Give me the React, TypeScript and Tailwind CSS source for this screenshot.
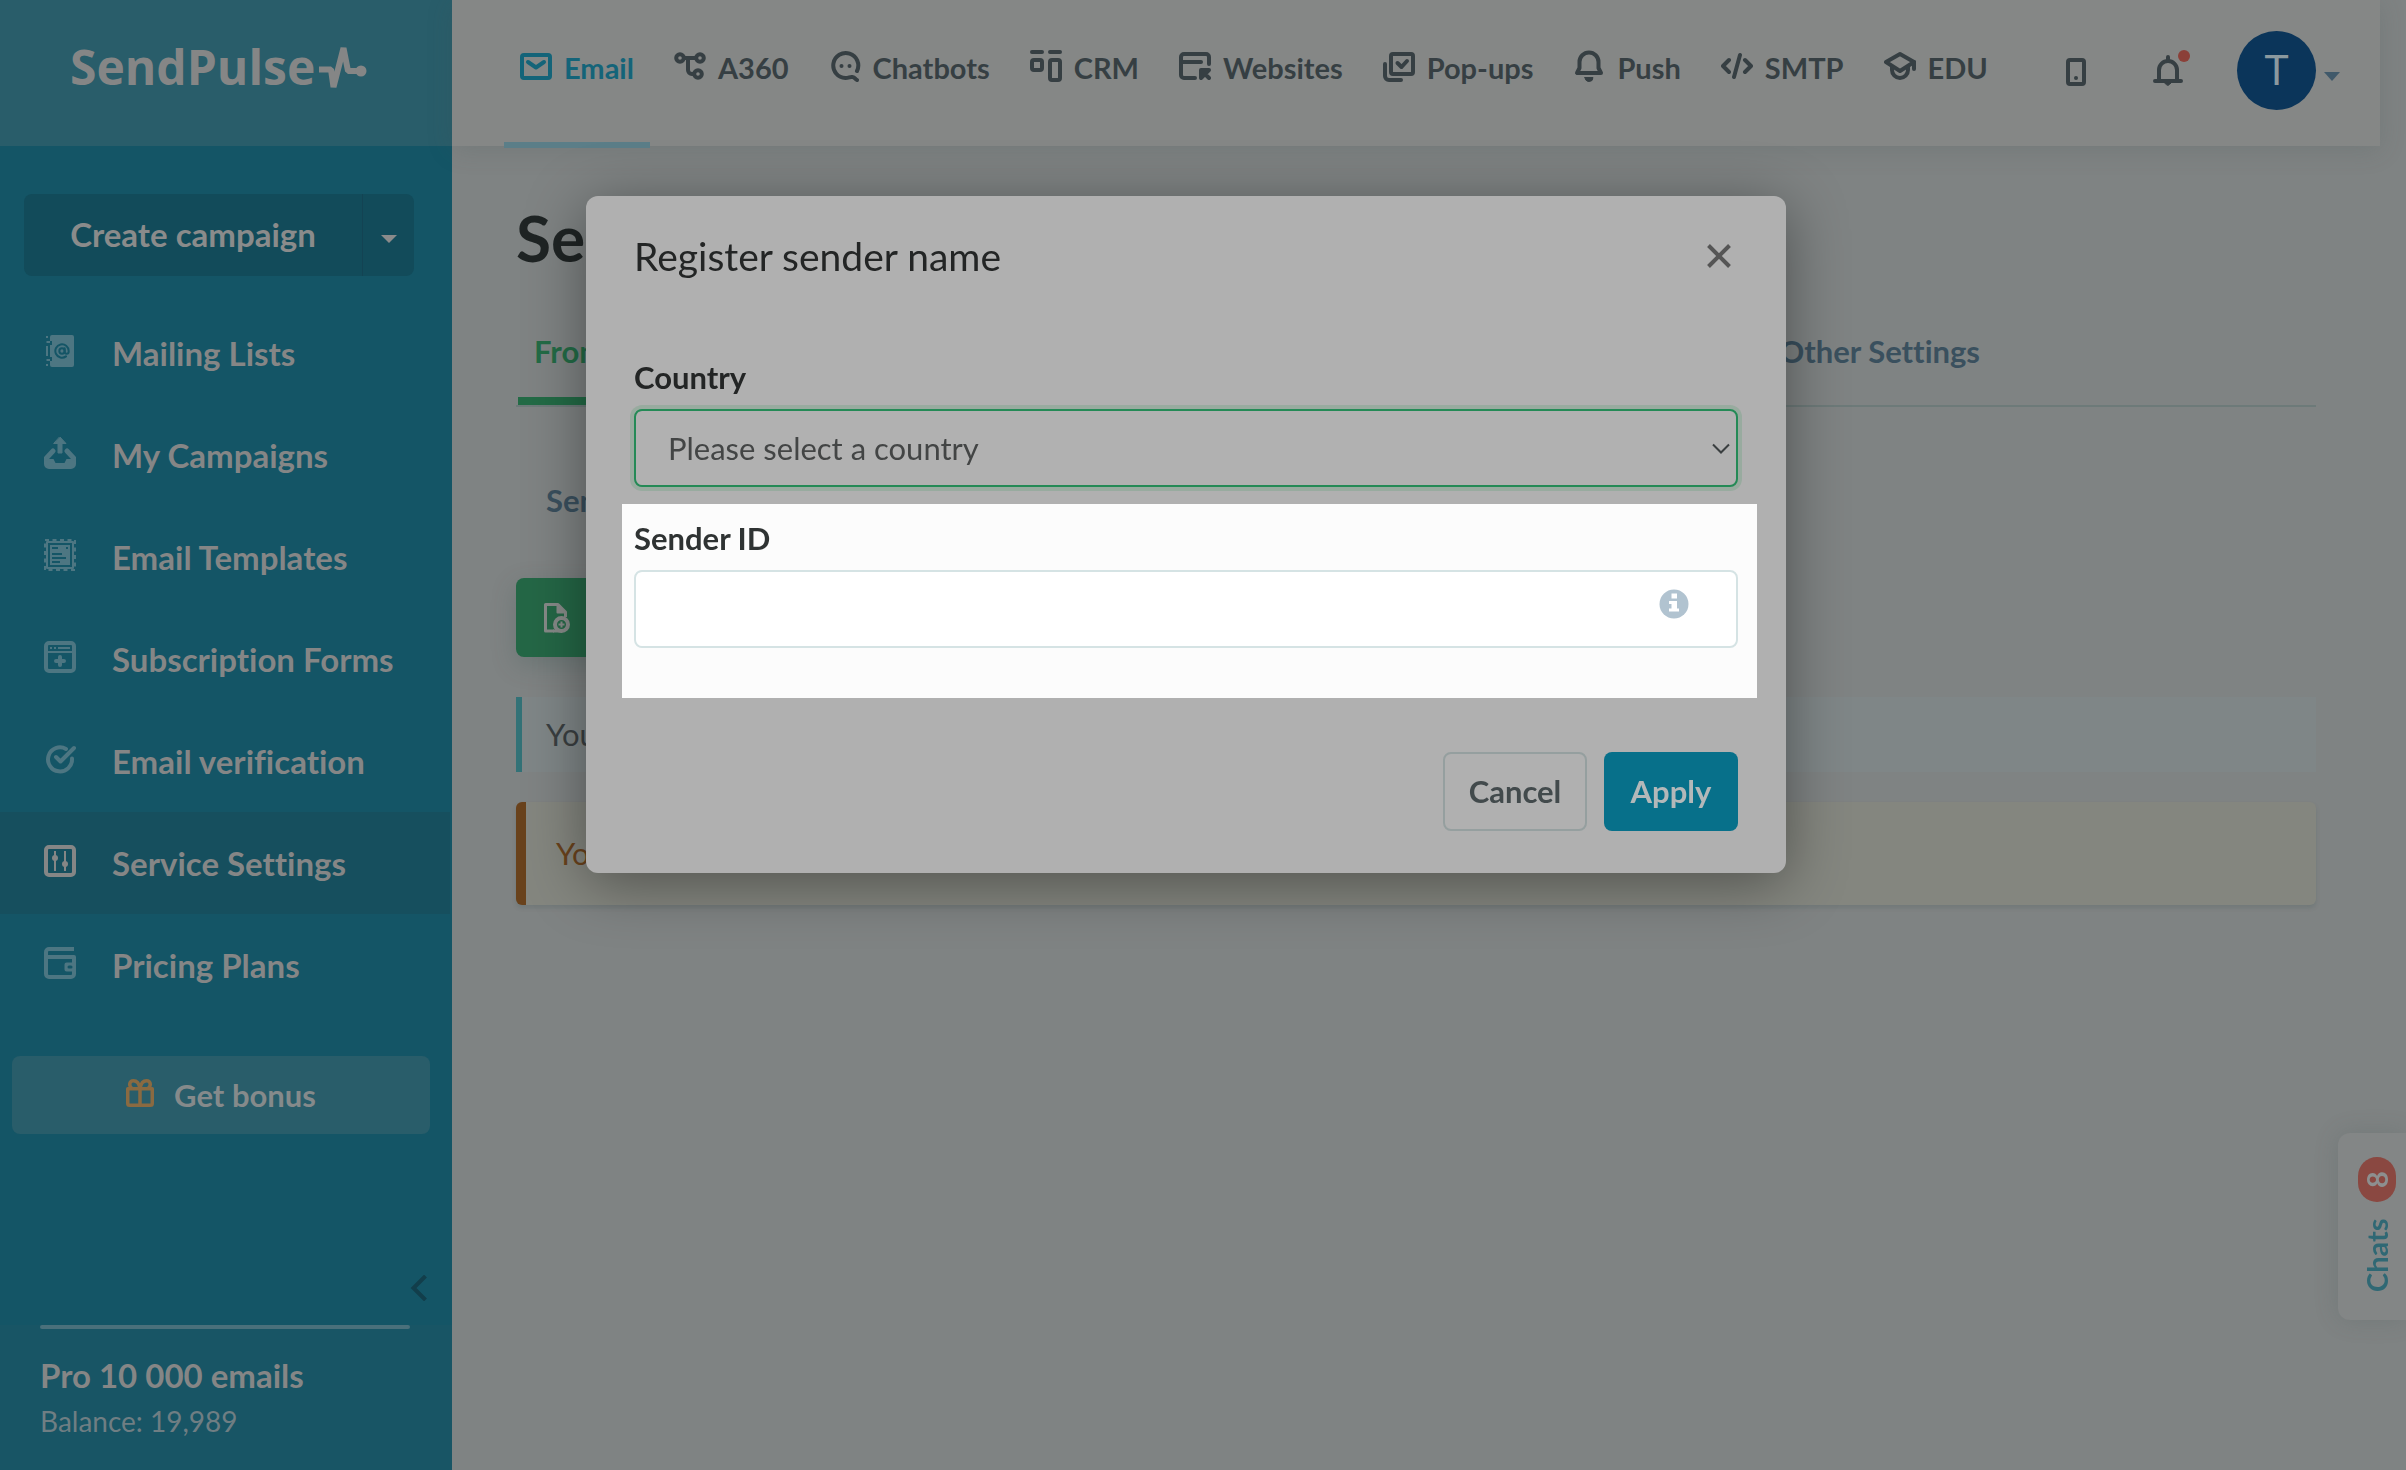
import type { ReactNode } from "react";
import { AtSign } from "lucide-react";
import clsx from "clsx";

function Icon({ children, className = "size-8" }: { children: ReactNode; className?: string }) {
  return (
    <svg
      viewBox="0 0 32 32"
      fill="none"
      stroke="currentColor"
      strokeWidth={4}
      strokeLinecap="round"
      strokeLinejoin="round"
      aria-hidden="true"
      className={clsx("shrink-0", className)}
    >
      {children}
    </svg>
  );
}

const sidebarItems = [
  {
    label: "Mailing Lists",
    icon: (
      <Icon>
        <path
          d="M8 0H28a2 2 0 0 1 2 2V30a2 2 0 0 1-2 2H8a2 2 0 0 1-2-2V26H8V22H6V10H8V6H6V2a2 2 0 0 1 2-2Z"
          fill="currentColor"
          stroke="none"
        />
        <path d="M3 1V3M3 11V21M3 29V31M2.5 7H6M2.5 25H6" strokeWidth={2} strokeLinecap="butt" />
        <AtSign x={10} y={8} width={16} height={16} stroke="#145566" strokeWidth={3} />
      </Icon>
    ),
  },
  {
    label: "My Campaigns",
    icon: (
      <Icon>
        <path
          d="M16 0 22 6.500H18V16H14V6.500H10Z"
          fill="currentColor"
          strokeWidth={1}
        />
        <path
          d="M0 22H9.500L11.500 26H20.500L22.500 22H32V27a5 5 0 0 1-5 5H5a5 5 0 0 1-5-5Z"
          fill="currentColor"
          stroke="none"
        />
        <path d="M9 14 2.500 21M23 14 29.500 21" strokeWidth={5} />
      </Icon>
    ),
  },
  {
    label: "Email Templates",
    icon: (
      <Icon>
        <rect x="1" y="1" width="30" height="30" strokeWidth={2} strokeDasharray="4 3.500" strokeLinecap="butt" />
        <rect x="3" y="3" width="26" height="26" strokeWidth={2} />
        <rect x="6" y="6" width="20" height="20" fill="currentColor" stroke="none" />
        <path
          d="M8 9H14M22 9H24M8 15H18M8 19H22M8 23H16"
          stroke="#145566"
          strokeWidth={2}
          strokeLinecap="butt"
        />
      </Icon>
    ),
  },
  {
    label: "Subscription Forms",
    icon: (
      <Icon>
        <rect x="2" y="2" width="28" height="28" rx="3" />
        <path d="M4 11H28M6 7H8M10 7H12M14 7H26" strokeWidth={2} strokeLinecap="butt" />
        <path d="M12 20H20M16 16V24" />
      </Icon>
    ),
  },
  {
    label: "Email verification",
    icon: (
      <Icon>
        <path d="M22 6A12 12 0 1 0 28 15.500" />
        <path d="M12 14 16.500 18.500 30 5" />
      </Icon>
    ),
  },
  {
    label: "Service Settings",
    active: true,
    icon: (
      <Icon>
        <rect x="2" y="2" width="28" height="28" rx="3" />
        <path d="M11 6V26M21 6V26" strokeWidth={2} strokeLinecap="butt" />
        <circle cx="11" cy="13" r="3" fill="currentColor" stroke="none" />
        <circle cx="21" cy="19" r="3" fill="currentColor" stroke="none" />
      </Icon>
    ),
  },
  {
    label: "Pricing Plans",
    icon: (
      <Icon>
        <path d="M30 2H5A3 3 0 0 0 2 5V27A3 3 0 0 0 5 30H27A3 3 0 0 0 30 27V10H4" strokeLinecap="butt" />
        <path d="M30 17.500H22.500V22.500H30" />
        <path d="M25 20H27" stroke="#145566" strokeWidth={3} />
      </Icon>
    ),
  },
];

const topItems = [
  {
    label: "Email",
    active: true,
    icon: (
      <Icon>
        <rect x="2" y="5" width="28" height="23" rx="2" />
        <path d="M8 12 16 17.500 24 12" />
      </Icon>
    ),
  },
  {
    label: "A360",
    icon: (
      <Icon>
        <circle cx="6" cy="8" r="3.800" />
        <circle cx="26" cy="8" r="3.800" />
        <circle cx="24" cy="24" r="3.800" />
        <path d="M10 8H22M14 8V20A4 4 0 0 0 18 24H20" />
      </Icon>
    ),
  },
  {
    label: "Chatbots",
    icon: (
      <Icon>
        <path d="M28 21A12.500 12.500 0 1 0 16.500 28C20 28 21 26.500 23.500 27 26 27.300 26 29 28 30" />
        <circle cx="12.500" cy="16" r="2" fill="currentColor" stroke="none" />
        <circle cx="20.500" cy="16" r="2" fill="currentColor" stroke="none" />
      </Icon>
    ),
  },
  {
    label: "CRM",
    icon: (
      <Icon>
        <path d="M2 2H12M20 2H30" />
        <rect x="2" y="10" width="10" height="10" rx="2" />
        <rect x="20" y="10" width="10" height="20" rx="2" />
      </Icon>
    ),
  },
  {
    label: "Websites",
    icon: (
      <Icon>
        <path d="M30 14V7A3 3 0 0 0 27 4H5A3 3 0 0 0 2 7V25A3 3 0 0 0 5 28H16" />
        <path d="M4 12H22" />
        <path d="M22 20H30L22 28ZM25 23 30 28" fill="currentColor" />
      </Icon>
    ),
  },
  {
    label: "Pop-ups",
    icon: (
      <Icon>
        <path d="M2 14V26A4 4 0 0 0 6 30H18" />
        <rect x="8" y="4" width="22" height="20" rx="2" />
        <path d="M14.500 13 18.500 17 24 11" />
      </Icon>
    ),
  },
  {
    label: "Push",
    icon: (
      <Icon>
        <path d="M4 23H28L25.500 18V12A9.500 9.500 0 0 0 6.500 12V18Z" />
        <path d="M12 27.500H20A4 4 0 0 1 12 27.500Z" fill="currentColor" strokeWidth={1} />
      </Icon>
    ),
  },
  {
    label: "SMTP",
    icon: (
      <Icon>
        <path d="M8 10 2 16 8 22M24 10 30 16 24 22M19 5 13 27" />
      </Icon>
    ),
  },
  {
    label: "EDU",
    icon: (
      <Icon>
        <path d="M16 4 30 12 16 21 2 12Z" />
        <path d="M8 17V20A8 8 0 0 0 24 20V17M30 12V19" />
      </Icon>
    ),
  },
];

function Sidebar() {
  return (
    <aside className="flex w-[452px] shrink-0 flex-col bg-[#145566]">
      <a href="#" className="flex h-[146px] items-center gap-1 bg-[#295d6a] pb-3 pl-[70px] text-[#858686]">
        <span className="font-['Open_Sans',sans-serif] text-[48px] leading-[60px] font-bold">SendPulse</span>
        <svg viewBox="0 0 48 44" className="h-11 w-12 shrink-0" fill="none" aria-hidden="true">
          <path d="M0 24.500H12L14.500 42 24.500 3 29 26H40" stroke="currentColor" strokeWidth={6} strokeLinejoin="bevel" />
          <circle cx="42" cy="26" r="5.500" fill="currentColor" />
        </svg>
      </a>

      <div className="mx-6 mt-12 mr-[38px] flex h-[82px] rounded-lg bg-[#124b5a] text-[#8a8b8b]">
        <button type="button" className="flex-1 border-r border-[#134353] pr-4 pl-4 text-[33px] font-bold">
          Create campaign
        </button>
        <button type="button" aria-label="More campaign types" className="flex w-[51px] items-center justify-center pt-2">
          <svg viewBox="0 0 16 8" className="h-2 w-4" aria-hidden="true">
            <path d="M0 0H16L8 8Z" fill="currentColor" />
          </svg>
        </button>
      </div>

      <nav className="mt-[26px]">
        {sidebarItems.map((item) => (
          <a
            key={item.label}
            href="#"
            className={clsx("mr-0.5 flex h-[102px] items-center gap-9 pl-11", item.active && "bg-[#164f5e]")}
          >
            <span className={clsx("mb-1", item.active ? "text-[#858686]" : "text-[#4d7682]")}>{item.icon}</span>
            <span className="pt-0.5 text-[33px] font-bold text-[#858686]">{item.label}</span>
          </a>
        ))}
      </nav>

      <button
        type="button"
        className="mt-10 mr-[22px] ml-3 flex h-[78px] items-center justify-center gap-5 rounded-lg bg-[#295d6a] text-[31px] font-bold text-[#858a8b]"
      >
        <Icon className="mb-1 size-7 text-[#8a6a41]">
          <path d="M2 11H30V28A2 2 0 0 1 28 30H4A2 2 0 0 1 2 28Z" />
          <path d="M16 11V30M16 11C15 5 12 2 8.500 2 4 2 3 7 6 10M16 11C17 5 20 2 23.500 2 28 2 29 7 26 10" />
        </Icon>
        Get bonus
      </button>

      <button type="button" aria-label="Collapse menu" className="mt-auto mr-6 mb-6 self-end text-[#123e4b]">
        <svg viewBox="0 0 18 26" className="h-[26px] w-[18px]" fill="none" aria-hidden="true">
          <path d="M15.500 1 3.500 13 15.500 25" stroke="currentColor" strokeWidth={4} />
        </svg>
      </button>

      <div className="bg-[#185565] pr-[42px] pb-[26px] pl-10">
        <div className="h-1 rounded-full bg-[#4a707b]" />
        <p className="mt-[22px] text-[33px] leading-[48px] font-bold text-[#858686]">Pro 10 000 emails</p>
        <p className="text-[28px] leading-[45px] text-[#6f7e83]">Balance: 19,989</p>
      </div>
    </aside>
  );
}

function TopBar() {
  return (
    <header className="mr-[26px] flex h-[146px] justify-between bg-[#858786] pr-10 pl-[52px] shadow-[0_4px_24px_rgba(60,80,80,0.18)]">
      <nav className="flex gap-2">
        {topItems.map((item) => (
          <a
            key={item.label}
            href="#"
            className={clsx(
              "flex h-[148px] items-center gap-3 border-b-[6px] px-4 pb-2.5 text-[29px] font-bold",
              item.active ? "border-[#5b7e88] text-[#146479]" : "border-transparent text-[#363f43]"
            )}
          >
            {item.icon}
            <span className="pt-1">{item.label}</span>
          </a>
        ))}
      </nav>

      <div className="flex h-[140px] items-center text-[#363f43]">
        <button type="button" aria-label="Mobile app" className="mr-[60px] pt-1">
          <Icon>
            <rect x="8" y="4" width="16" height="24" rx="2" />
            <circle cx="16" cy="22" r="2" fill="currentColor" stroke="none" />
          </Icon>
        </button>
        <button type="button" aria-label="Notifications" className="relative mr-[53px]">
          <Icon>
            <path d="M3 27H29M7 26V16A9 9 0 0 1 25 16V26M16 3V6" />
            <path d="M13 29H19L16 31.500Z" fill="currentColor" strokeWidth={1} />
          </Icon>
          <span className="absolute -top-1 -right-1.5 size-3 rounded-full bg-[#8b4038]" />
        </button>
        <button type="button" aria-label="Account" className="flex items-center gap-2">
          <span className="flex size-[79px] items-center justify-center rounded-full bg-[#0b355a] font-['Roboto',sans-serif] text-[42px] text-[#8b999f]">
            T
          </span>
          <svg viewBox="0 0 16 9" className="mt-3 h-[9px] w-4 text-[#40596a]" aria-hidden="true">
            <path d="M0 0H16L8 9Z" fill="currentColor" />
          </svg>
        </button>
      </div>
    </header>
  );
}

function SettingsPage() {
  return (
    <main className="pt-[52px] pr-[90px] pl-16">
      <h1 className="text-[64px] leading-[80px] font-bold text-[#1f2424]">Sen</h1>

      <div className="mt-[53px] flex border-b-2 border-[#6d7a79] text-[31px] leading-10 font-bold">
        <a href="#" className="ml-0.5 border-b-8 border-[#236b46] px-4 pb-[26px] text-[#236b46]">
          From
        </a>
        <a href="#" className="mr-84 ml-auto text-[#3a505e]">
          Other Settings
        </a>
      </div>

      <a href="#" className="mt-[73px] ml-[30px] block w-fit text-[31px] leading-10 font-bold text-[#3a505e]">
        Sender
      </a>

      <button
        type="button"
        aria-label="Add sender"
        className="mt-[58px] flex h-[79px] w-[320px] items-center rounded-lg bg-[#246746] pl-[27px] text-[#868a88] shadow-[0_8px_24px_rgba(50,80,75,0.25)]"
      >
        <svg viewBox="0 0 28 32" className="h-8 w-7" fill="none" stroke="currentColor" strokeWidth={3} strokeLinejoin="round" aria-hidden="true">
          <path d="M11 29H2.500V2.500H15L22.500 10V15" />
          <path d="M14.500 3V10.500H22Z" fill="currentColor" strokeWidth={2} />
          <circle cx="18.500" cy="22.500" r="6.500" strokeWidth={4} />
          <path d="M18.500 19.500V25.500M15.500 22.500H21.500" strokeWidth={2} />
          <path d="M10 29H19" />
        </svg>
      </button>

      <p className="mt-10 flex h-[75px] items-center border-l-6 border-[#337277] bg-[#7f8687] pl-6 text-[31px] text-[#3a3f41]">
        You
      </p>
      <p className="mt-[30px] flex h-[103px] items-center rounded-md border-l-10 border-[#69421c] bg-[#84867f] pl-[30px] text-[31px] text-[#69421c] shadow-[0_3px_4px_rgba(60,80,80,0.2)]">
        You
      </p>
    </main>
  );
}

function RegisterSenderDialog() {
  return (
    <div className="fixed inset-0 flex items-start justify-center pt-[196px] pr-[34px]">
      <form
        role="dialog"
        aria-labelledby="dialog-title"
        className="w-[1200px] rounded-xl bg-[#b0b0b0] px-12 pt-9 pb-[42px] shadow-[0_10px_60px_rgba(0,0,0,0.4)]"
      >
        <div className="flex items-center justify-between">
          <h2 id="dialog-title" className="text-[39px] leading-[48px] text-[#232525]">
            Register sender name
          </h2>
          <button type="button" aria-label="Close" className="mr-[7px] text-[#555]">
            <svg viewBox="0 0 24 24" className="size-6" fill="none" stroke="currentColor" strokeWidth={4} aria-hidden="true">
              <path d="M1.500 1.500 22.500 22.500M22.500 1.500 1.500 22.500" />
            </svg>
          </button>
        </div>

        <label htmlFor="country" className="mt-[77px] block text-[31px] leading-10 font-bold text-[#232525]">
          Country
        </label>
        <div className="relative mt-3">
          <select
            id="country"
            className="block h-[78px] w-full appearance-none rounded-lg border-2 border-[#248a56] bg-[#b1b1b1] px-8 text-[31px] text-[#434545] ring-4 ring-[#98ab9f] outline-none"
          >
            <option>Please select a country</option>
          </select>
          <svg viewBox="0 0 18 11" className="pointer-events-none absolute top-[34px] right-2 h-[11px] w-[18px]" fill="none" aria-hidden="true">
            <path d="M1 1.500 9 9.500 17 1.500" stroke="#3a3f40" strokeWidth={2} />
          </svg>
        </div>

        <div className="mt-[17px] -mr-[19px] -ml-3 bg-[#fcfcfc] pt-3.5 pr-[19px] pb-[50px] pl-3">
          <label htmlFor="sender-id" className="block text-[31px] leading-10 font-bold text-[#2f3333]">
            Sender ID
          </label>
          <div className="relative mt-3">
            <input
              id="sender-id"
              type="text"
              className="block h-[78px] w-full rounded-lg border-2 border-[#d5e3e4] bg-white px-8 text-[31px] outline-none"
            />
            <svg viewBox="0 0 30 30" className="absolute top-[19px] right-[49px] size-[30px]" aria-hidden="true">
              <circle cx="15" cy="15" r="14.500" fill="#b1c3d0" />
              <path d="M12.500 4.500H18V9.500H12.500ZM10 12H18V19.500H20V22.500H10V19.500H12.500V15H10Z" fill="#fff" />
            </svg>
          </div>
        </div>

        <div className="mt-[54px] flex justify-end gap-[17px] text-[31px] font-bold">
          <button type="button" className="h-[79px] w-36 rounded-lg border-2 border-[#959f9f] text-[#424a4c]">
            Cancel
          </button>
          <button type="submit" className="h-[79px] w-[134px] rounded-lg bg-[#07708a] text-[#b3b8b9]">
            Apply
          </button>
        </div>
      </form>
    </div>
  );
}

function ChatsTab() {
  return (
    <button
      type="button"
      className="fixed top-[1133px] right-0 flex h-[187px] w-[68px] rotate-180 items-center gap-4 rounded-r-xl bg-[#838686] pt-7 pr-2.5 text-[29px] font-bold text-[#2f6874] shadow-[0_0_24px_rgba(60,80,80,0.2)] [writing-mode:vertical-rl]"
    >
      Chats
      <span className="flex h-[45px] w-[38px] shrink-0 items-center justify-center rounded-full bg-[#8a4841] text-[#8d8f8f]">
        8
      </span>
    </button>
  );
}

export default function App() {
  return (
    <div className="flex min-h-screen bg-[#7f8383] font-['Lato',sans-serif] [font-variant-ligatures:none]">
      <Sidebar />
      <div className="min-w-0 flex-1">
        <TopBar />
        <SettingsPage />
      </div>
      <ChatsTab />
      <RegisterSenderDialog />
    </div>
  );
}
